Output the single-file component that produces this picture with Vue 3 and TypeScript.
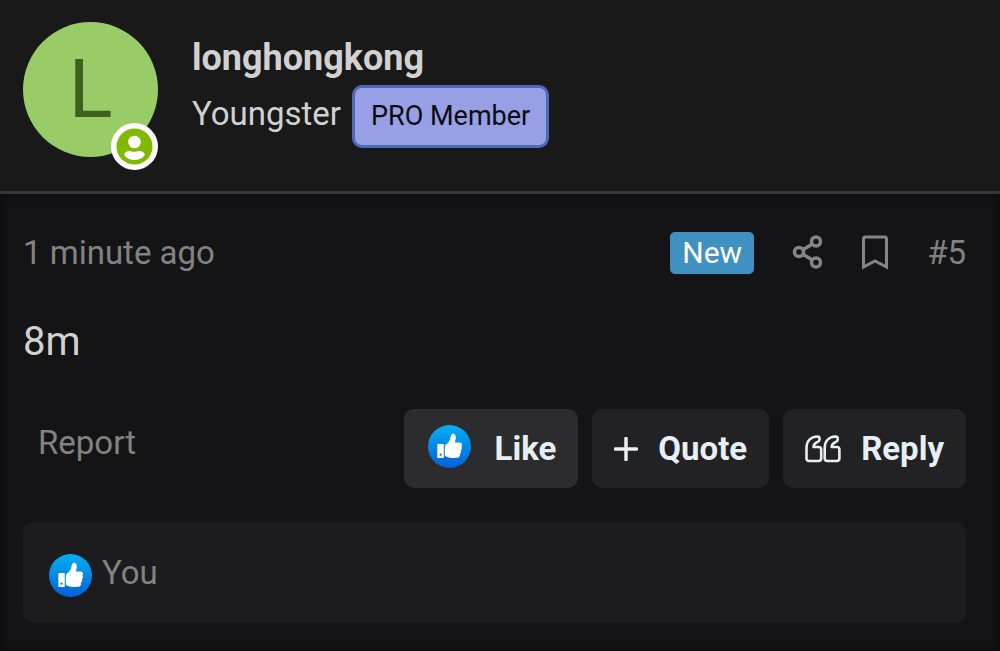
<script setup lang="ts">
interface Post {
  author: string
  rank: string
  badge: string
  age: string
  number: number
  body: string
  reactedBy: string
}

const post: Post = {
  author: 'longhongkong',
  rank: 'Youngster',
  badge: 'PRO Member',
  age: '1 minute ago',
  number: 5,
  body: '8m',
  reactedBy: 'You',
}
</script>

<template>
  <article class="post">
    <svg class="defs" width="0" height="0" aria-hidden="true">
      <defs>
        <linearGradient id="like-blue" x1="0" y1="0" x2="0" y2="1">
          <stop offset="0" stop-color="#04b0f2" />
          <stop offset="1" stop-color="#0560d8" />
        </linearGradient>
        <symbol id="like-icon" viewBox="0 0 42 42">
          <circle cx="21" cy="21" r="21" fill="url(#like-blue)" />
          <path
            fill="#fff"
            d="M10 18.5h4.500c.5 0 .9.4.9.9v12c0 .5-.4.9-.9.9H10c-.5 0-.9-.4-.9-.9v-12c0-.5.4-.9.9-.9Z"
          />
          <path
            fill="#fff"
            d="M17 19.200c2.600-1.300 4.300-4 4.900-6.600.4-1.800.5-3.800 2.300-4 2.300-.2 3.300 2.300 2.900 4.700-.2 1.500-.7 2.700-.9 3.700h4.700c1.500 0 2.500 1.100 2.400 2.400-.1.800-.4 1.400-.8 1.800.6.500.8 1.200.6 2-.1.800-.6 1.400-1.100 1.700.4.500.5 1.100.3 1.800-.2.700-.7 1.200-1.200 1.400.3.500.3 1.100.1 1.700-.4 1.500-1.500 2.200-3.200 2.300-3.400.2-7.300.1-9.700-1.200-.5-.3-1.300-.4-1.800-.4-.3-3.900-.3-7.800.5-11.300Z"
          />
          <circle cx="12.300" cy="29" r="1.100" fill="#0876df" />
        </symbol>
      </defs>
    </svg>

    <header class="user">
      <a class="avatar" href="#profile" aria-label="Profile of longhongkong">
        <span class="letter">L</span>
        <svg class="status" viewBox="0 0 47 47" aria-hidden="true">
          <circle cx="23.500" cy="23.500" r="23.500" fill="#fff" />
          <circle cx="23.500" cy="23.500" r="18" fill="#80ba00" />
          <circle cx="23.500" cy="19" r="6.300" fill="#fff" />
          <path
            fill="#fff"
            d="M13.300 32c0-2.400 2.500-4 5-4 1.800 0 3 .8 5.200.8s3.400-.8 5.200-.8c2.500 0 5 1.600 5 4-2 3.300-6 5-10.200 5s-8.200-1.700-10.200-5Z"
          />
        </svg>
      </a>
      <div class="identity">
        <a class="name" href="#profile">{{ post.author }}</a>
        <div class="titles">
          <span>{{ post.rank }}</span>
          <span class="pro">{{ post.badge }}</span>
        </div>
      </div>
    </header>

    <section class="content">
      <div class="meta">
        <a class="muted" href="#post"><time>{{ post.age }}</time></a>
        <span class="new">New</span>
        <button class="icon-button share" type="button" aria-label="Share">
          <svg width="32" height="36" viewBox="0 0 32 36" fill="none" stroke="#858585" stroke-width="3.500">
            <path d="M10.500 15 19.500 9.500M10.500 19 19.500 24.500" />
            <circle cx="7" cy="17" r="4.500" />
            <circle cx="24" cy="6.500" r="4.500" />
            <circle cx="24" cy="27.500" r="4.500" />
          </svg>
        </button>
        <button class="icon-button" type="button" aria-label="Bookmark">
          <svg width="26" height="36" viewBox="0 0 26 36" fill="none" stroke="#858585" stroke-width="3">
            <path d="M1.500 32V4c0-1.100.7-2 1.800-2h19.400c1.100 0 1.800.9 1.800 2v28L13 26Z" />
          </svg>
        </button>
        <a class="muted number" href="#post">#{{ post.number }}</a>
      </div>

      <p class="body">{{ post.body }}</p>

      <div class="actions">
        <a class="muted report" href="#report">Report</a>
        <button class="action like" type="button">
          <svg class="thumb" width="43" height="43" aria-hidden="true"><use href="#like-icon" /></svg>
          <span>Like</span>
        </button>
        <button class="action" type="button">
          <svg width="24" height="24" viewBox="0 0 24 24" aria-hidden="true">
            <path d="M12 1.500v21M1.500 12h21" stroke="#e6eff5" stroke-width="3.500" stroke-linecap="round" />
          </svg>
          <span>Quote</span>
        </button>
        <button class="action" type="button">
          <svg width="36" height="28" viewBox="0 0 36 28" fill="none" stroke="#e6eff5" stroke-width="2.600" stroke-linejoin="round" aria-hidden="true">
            <path d="M12.500 1.500c1.300 0 2 .7 2 1.700v1.600c0 1-.5 1.500-1.500 1.900-2.600 1-4.300 2-4.500 5.300h5c1.700 0 2.700 1 2.700 2.700v8.600c0 1.700-1 2.700-2.700 2.700H4.200c-1.700 0-2.700-1-2.700-2.700V13C1.500 6.500 5.500 1.800 12.500 1.500Z" />
            <path d="M30.700 1.500c1.300 0 2 .7 2 1.700v1.600c0 1-.5 1.500-1.500 1.900-2.600 1-4.300 2-4.500 5.300h5c1.700 0 2.700 1 2.700 2.700v8.600c0 1.700-1 2.700-2.700 2.700h-9.300c-1.700 0-2.700-1-2.700-2.700V13c0-6.500 4-11.200 11-11.500Z" />
          </svg>
          <span>Reply</span>
        </button>
      </div>

      <footer class="reactions">
        <svg class="thumb" width="43" height="43" aria-hidden="true"><use href="#like-icon" /></svg>
        <a class="muted" href="#reactions">{{ post.reactedBy }}</a>
      </footer>
    </section>
  </article>
</template>

<style>
body {
  background: #141416;
}
</style>

<style scoped>
* {
  box-sizing: border-box;
}
.post {
  min-height: 100vh;
  display: flex;
  flex-direction: column;
  font-family: Roboto, "Liberation Sans", sans-serif;
  font-size: 33px;
  line-height: 40px;
  color: #d1d1d1;
  background: #141416;
}
.defs {
  position: absolute;
}
a {
  color: inherit;
  text-decoration: none;
}
button {
  border: 0;
  margin: 0;
  font: inherit;
  color: inherit;
  cursor: pointer;
}
svg {
  flex: none;
}
.user {
  display: flex;
  gap: 34px;
  padding: 22px 24px 34px 23px;
  background: #191919;
  border-bottom: 3px solid #38383a;
}
.avatar {
  position: relative;
  flex: none;
  display: flex;
  align-items: center;
  justify-content: center;
  width: 135px;
  height: 135px;
  border-radius: 50%;
  background: #99cc66;
  color: #3f611f;
}
.letter {
  font-size: 82px;
  line-height: 96px;
  padding-bottom: 2px;
}
.status {
  position: absolute;
  right: 0;
  bottom: -13px;
  width: 47px;
  height: 47px;
}
.identity {
  padding-top: 14px;
}
.name {
  display: block;
  font-size: 36px;
  line-height: 44px;
  font-weight: 700;
}
.titles {
  display: flex;
  align-items: flex-start;
  gap: 11px;
  padding-top: 5px;
}
.titles > span:first-child {
  padding-top: 9px;
}
.pro {
  padding: 11px 16px 12px;
  border: 3px solid #5068b8;
  border-radius: 10px;
  background: #97a0e5;
  color: #0b0b12;
  font-size: 27px;
  line-height: 34px;
}
.content {
  flex: 1;
  padding: 38px 34px 28px 23px;
  box-shadow: inset 0 0 12px #0c0c0c;
}
.meta {
  display: flex;
  align-items: center;
}
.muted {
  color: #828282;
}
.new {
  margin-left: auto;
  padding: 0 12px;
  border-radius: 5px;
  background: #3f91c1;
  color: #fff;
  font-size: 30px;
  line-height: 42px;
}
.icon-button {
  display: flex;
  padding: 0;
  background: none;
}
.share {
  margin: 0 38px;
}
.number {
  margin-left: 39px;
}
.body {
  margin: 44px 0 0;
  font-size: 40px;
  line-height: 48px;
}
.actions {
  display: flex;
  align-items: center;
  gap: 14px;
  padding-top: 43px;
}
.report {
  margin-right: auto;
  padding: 0 0 12px 15px;
}
.action {
  display: flex;
  align-items: center;
  gap: 20px;
  height: 79px;
  padding: 0 22px;
  border-radius: 10px;
  background: #222224;
  color: #e6eff5;
  font-weight: 700;
}
.like {
  gap: 24px;
  padding-left: 24px;
  background: #2c2c2e;
}
.like .thumb {
  margin-bottom: 5px;
}
.reactions {
  display: flex;
  align-items: center;
  gap: 10px;
  margin-top: 34px;
  padding: 29px 26px;
  border-radius: 10px;
  background: #1c1c1e;
}
.reactions .thumb {
  margin-top: 3px;
  margin-bottom: -3px;
}
</style>
